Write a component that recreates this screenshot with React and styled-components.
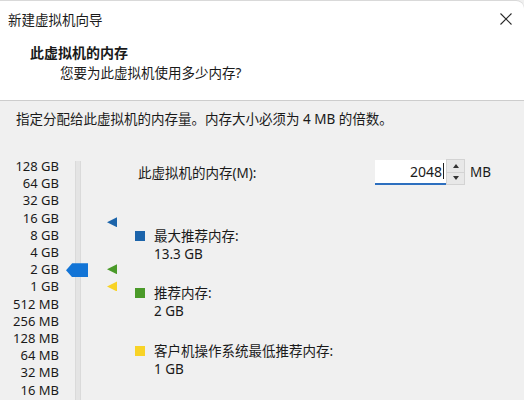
import styled, { createGlobalStyle } from "styled-components";

const GlobalStyle = createGlobalStyle`
  html, body {
    margin: 0;
    padding: 0;
    background: #f0f0f0;
  }
  body {
    font-family: "Noto Sans", "Noto Sans CJK SC", sans-serif;
    color: #1a1a1a;
  }
`;

const SCALE = [
  "128 GB", "64 GB", "32 GB", "16 GB", "8 GB", "4 GB", "2 GB", "1 GB",
  "512 MB", "256 MB", "128 MB", "64 MB", "32 MB", "16 MB",
];
const STEP = 17.2;
const FIRST = 9;

// 128 GB is log2 = 7, each row down halves the size
const posFor = (gb) => FIRST + (7 - Math.log2(gb)) * STEP;

const Window = styled.div`
  width: 524px;
  height: 400px;
  overflow: hidden;
  background: #f0f0f0;
  box-sizing: border-box;
  border-top: 1px solid #d9d9d9;
  border-top-right-radius: 8px;
`;

const Header = styled.div`
  height: 99px;
  background: #fff;
  border-bottom: 1px solid #cdcdcd;
  border-top-right-radius: 8px;
`;

const TitleBar = styled.div`
  height: 35px;
  display: flex;
  align-items: center;
  justify-content: space-between;
  padding: 0 12px 0 8px;
  font-size: 13.5px;
`;

const CloseIcon = () => (
  <svg width="12" height="12" viewBox="0 0 12 12">
    <path d="M0.5 0.5 L11.5 11.5 M11.5 0.5 L0.5 11.5" stroke="#2b2b2b" strokeWidth="1.1" />
  </svg>
);

const Heading = styled.div`
  margin-top: 7px;
  padding-left: 30px;
  font-size: 14px;
  font-weight: 700;
  line-height: 20px;
`;

const SubHeading = styled.div`
  padding-left: 60px;
  font-size: 13.5px;
  line-height: 20px;
`;

const Body = styled.div`
  padding: 8px 0 0 16px;
`;

const Intro = styled.div`
  font-size: 13.5px;
  line-height: 20px;
`;

const Main = styled.div`
  display: flex;
  align-items: flex-start;
  margin-top: 29px;
  margin-left: -16px;
  height: 260px;
`;

const ScaleList = styled.div`
  width: 59px;
  text-align: right;
  font-size: 13px;
  line-height: ${STEP}px;
`;

const TrackArea = styled.div`
  position: relative;
  width: 6px;
  height: 100%;
  margin-left: 16px;
`;

const Track = styled.div`
  margin-top: 3px;
  height: 100%;
  background: #e4e4e4;
  border-left: 1px solid #dadada;
  border-right: 1px solid #dadada;
  box-sizing: border-box;
`;

const Thumb = styled.div`
  position: absolute;
  left: -9px;
  width: 22px;
  height: 14px;
  margin-top: -7px;
  background: #1274d6;
  clip-path: polygon(0 50%, 28% 0, 100% 0, 100% 100%, 28% 100%);
`;

const MarkerArea = styled.div`
  position: relative;
  width: 10px;
  height: 100%;
  margin-left: 26px;
`;

const Marker = styled.div`
  position: absolute;
  left: 0;
  width: 10px;
  height: 10px;
  margin-top: -5px;
  background: ${(p) => p.color};
  clip-path: polygon(0 50%, 100% 0, 100% 100%);
`;

const Content = styled.div`
  margin-left: 18px;
  display: flex;
  flex-direction: column;
`;

const InputRow = styled.div`
  display: flex;
  align-items: center;
  margin-top: 1px;
  height: 26px;
  font-size: 13.5px;
`;

const InputLabel = styled.div`
  width: 237px;
  padding-left: 3px;
`;

const NumberBox = styled.div`
  width: 71px;
  height: 25px;
  box-sizing: border-box;
  background: #fff;
  border-bottom: 2px solid #2d6fbf;
  display: flex;
  align-items: center;
  justify-content: flex-end;
  padding-right: 2px;
  font-size: 14px;
`;

const Caret = styled.span`
  display: inline-block;
  width: 1px;
  height: 16px;
  margin-left: 1px;
  background: #222;
`;

const Spinner = styled.div`
  width: 19px;
  height: 26px;
  box-sizing: border-box;
  border: 1px solid #d3d3d3;
  background: #e8e8e8;
  display: flex;
  flex-direction: column;
`;

const SpinButton = styled.div`
  flex: 1;
  display: flex;
  align-items: center;
  justify-content: center;
  & + & {
    border-top: 1px solid #d3d3d3;
  }
  &::after {
    content: "";
    border-left: 3px solid transparent;
    border-right: 3px solid transparent;
    ${(p) => (p.$up ? "border-bottom: 4px solid #333;" : "border-top: 4px solid #333;")}
  }
`;

const Unit = styled.div`
  margin-left: 5px;
`;

const Legend = styled.div`
  display: flex;
  align-items: flex-start;
  margin-top: ${(p) => p.$gap}px;
  font-size: 13.5px;
  line-height: 18px;
`;

const Swatch = styled.div`
  width: 10px;
  height: 10px;
  margin-top: 4px;
  margin-right: 9px;
  background: ${(p) => p.color};
`;

const LEGEND = [
  { color: "#1c64aa", label: "最大推荐内存:", value: "13.3 GB", gb: 13.3, gap: 42 },
  { color: "#4a9a29", label: "推荐内存:", value: "2 GB", gb: 2, gap: 21 },
  { color: "#f8d326", label: "客户机操作系统最低推荐内存:", value: "1 GB", gb: 1, gap: 22 },
];

export default function App() {
  return (
    <Window>
      <GlobalStyle />
      <Header>
        <TitleBar>
          <span>新建虚拟机向导</span>
          <CloseIcon />
        </TitleBar>
        <Heading>此虚拟机的内存</Heading>
        <SubHeading>您要为此虚拟机使用多少内存?</SubHeading>
      </Header>
      <Body>
        <Intro>指定分配给此虚拟机的内存量。内存大小必须为 4 MB 的倍数。</Intro>
        <Main>
          <ScaleList>
            {SCALE.map((s) => (
              <div key={s}>{s}</div>
            ))}
          </ScaleList>
          <TrackArea>
            <Track />
            <Thumb style={{ top: posFor(2) }} />
          </TrackArea>
          <MarkerArea>
            {LEGEND.map((l) => (
              <Marker key={l.label} color={l.color} style={{ top: posFor(l.gb) - 1 }} />
            ))}
          </MarkerArea>
          <Content>
            <InputRow>
              <InputLabel>此虚拟机的内存(M):</InputLabel>
              <NumberBox>
                2048
                <Caret />
              </NumberBox>
              <Spinner>
                <SpinButton $up />
                <SpinButton />
              </Spinner>
              <Unit>MB</Unit>
            </InputRow>
            {LEGEND.map((l) => (
              <Legend key={l.label} $gap={l.gap}>
                <Swatch color={l.color} />
                <div>
                  <div>{l.label}</div>
                  <div>{l.value}</div>
                </div>
              </Legend>
            ))}
          </Content>
        </Main>
      </Body>
    </Window>
  );
}
